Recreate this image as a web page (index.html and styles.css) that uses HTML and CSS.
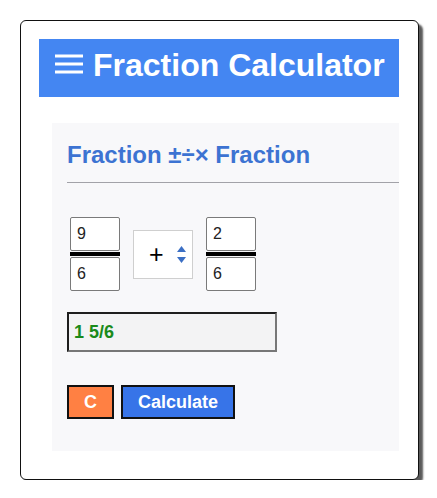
FILE: index.html
```html
<!DOCTYPE html>
<html lang="en">
<head>
  <meta charset="UTF-8" />
  <title>Fraction Calculator</title>
  <link rel="stylesheet" href="styles.css">
</head>
<body>

  <div class="card">
    <header class="topbar">
      <svg class="menu" width="28" height="20" viewBox="0 0 28 20">
        <rect x="0" y="0.5" width="28" height="3" fill="#fff"/>
        <rect x="0" y="8.5" width="28" height="3" fill="#fff"/>
        <rect x="0" y="16.5" width="28" height="3" fill="#fff"/>
      </svg>
      <h1>Fraction Calculator</h1>
    </header>

    <main class="panel">
      <h2>Fraction ±÷× Fraction</h2>
      <div class="rule"></div>

      <div class="calc-row">
        <div class="fraction">
          <input type="text" value="9">
          <div class="bar"></div>
          <input type="text" value="6">
        </div>

        <div class="operator">
          <span>+</span>
          <svg width="9" height="17" viewBox="0 0 9 17">
            <polygon points="4.5,0 9,6 0,6" fill="#3b6fc4"/>
            <polygon points="0,11 9,11 4.5,17" fill="#3b6fc4"/>
          </svg>
        </div>

        <div class="fraction">
          <input type="text" value="2">
          <div class="bar"></div>
          <input type="text" value="6">
        </div>
      </div>

      <div class="result">1 5/6</div>

      <div class="actions">
        <button class="btn-clear">C</button>
        <button class="btn-calc">Calculate</button>
      </div>
    </main>
  </div>

</body>
</html>
```

FILE: styles.css
```css
body {
  font-family: "Liberation Sans", Arial, sans-serif;
  margin: 0;
  padding: 0;
  background: #fff;
}
.card {
  box-sizing: border-box;
  width: 399px;
  height: 460px;
  margin: 20px 0 0 20px;
  padding: 18px 19px 0 18px;
  border: 1px solid #111;
  border-radius: 6px;
  background: #fff;
  box-shadow: 4px 4px 2px #5a5a5a;
}
.topbar {
  box-sizing: border-box;
  height: 58px;
  background: #4486f2;
  color: white;
  display: flex;
  align-items: center;
  padding: 0 0 5px 16px;
}
.menu {
  margin-right: 10px;
  margin-bottom: 3px;
}
.topbar h1 {
  margin: 0;
  font-size: 32px;
  font-weight: bold;
}
.panel {
  margin: 26px 0 0 13px;
  background: #f8f8fa;
  padding: 18px 0 32px 15px;
}
.panel h2 {
  margin: 0;
  font-size: 24px;
  font-weight: bold;
  color: #3c73d2;
}
.rule {
  margin-top: 13px;
  border-top: 1px solid #a2a2a8;
}
.calc-row {
  display: flex;
  align-items: center;
  gap: 13px;
  margin-top: 34px;
  padding-left: 3px;
}
.fraction {
  display: flex;
  flex-direction: column;
  width: 50px;
}
.fraction input {
  box-sizing: border-box;
  width: 50px;
  height: 34px;
  margin: 0;
  padding: 0 6px;
  border: 1px solid #7a7a7a;
  border-radius: 2px;
  background: #fff;
  font-family: "Liberation Sans", Arial, sans-serif;
  font-size: 16px;
  color: #222;
}
.bar {
  height: 4px;
  margin: 1px 0;
  background: #000;
}
.operator {
  box-sizing: border-box;
  width: 60px;
  height: 49px;
  border: 1px solid #cfcfcf;
  background: #fff;
  display: flex;
  align-items: center;
  padding-left: 15px;
  gap: 13px;
  font-size: 25px;
  color: #000;
}
.result {
  box-sizing: border-box;
  width: 210px;
  height: 40px;
  margin-top: 21px;
  padding-left: 5px;
  display: flex;
  align-items: center;
  border: 2px solid;
  border-color: #1e1e1e #777 #777 #1e1e1e;
  background: #f3f3f4;
  color: #1a8a1a;
  font-size: 18px;
  font-weight: bold;
}
.actions {
  display: flex;
  gap: 7px;
  margin-top: 33px;
}
.actions button {
  height: 34px;
  padding: 0 15px;
  border: 2px solid #111;
  border-radius: 0;
  color: white;
  font-family: "Liberation Sans", Arial, sans-serif;
  font-size: 18px;
  font-weight: bold;
  cursor: pointer;
}
.btn-clear {
  background-color: #ff8043;
}
.btn-calc {
  background-color: #3774e8;
}
```
